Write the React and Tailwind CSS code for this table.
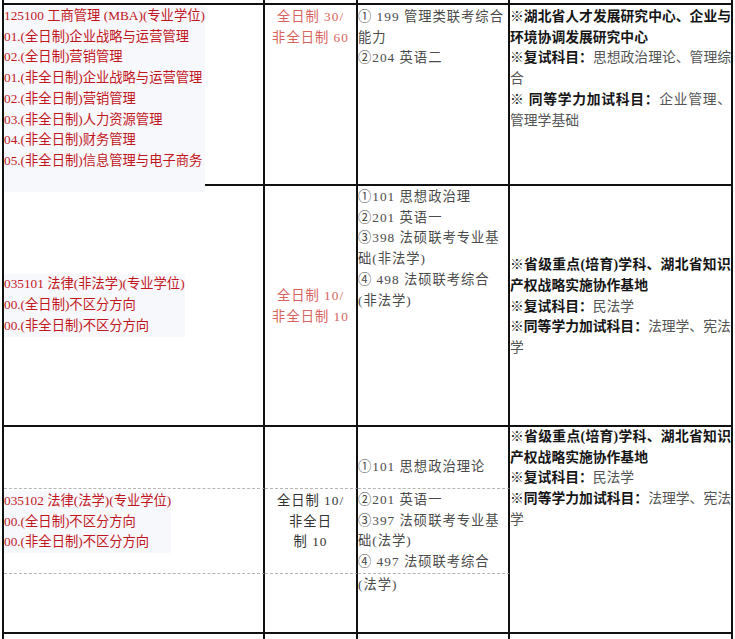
import React from 'react'

const cell = 'border-r-2 border-b-2 border-[#111]'
const dash = 'border-r-2 border-b border-r-[#111] border-b-[#b5b5b5] [border-bottom-style:dashed]'
const full = 'text-justify [text-align-last:justify]'

const Red = ({ lines }) => (
  <div className="w-fit bg-[#f7f8fb] text-[#c2161e]">
    {lines.map((l, i) => (
      <div key={i} className="whitespace-nowrap">{l}</div>
    ))}
  </div>
)

const Quota = ({ lines, color }) => (
  <div className={`text-center tracking-[1px] ${color}`}>
    {lines.map((l, i) => (
      <div key={i} className="whitespace-nowrap">{l}</div>
    ))}
  </div>
)

const Lines = ({ lines }) => (
  <div className="tracking-[1px] text-[#4a4a4a]">
    {lines.map((l, i) => (
      <div key={i} className="whitespace-nowrap">{l}</div>
    ))}
  </div>
)

const LawNotes = () => (
  <div className="text-[13.8px] text-[#555]">
    <div className={`font-bold text-[#151515] ${full}`}>※省级重点(培育)学科、湖北省知识</div>
    <div className="font-bold text-[#151515]">产权战略实施协作基地</div>
    <div><b className="text-[#151515]">※复试科目：</b>民法学</div>
    <div className={full}><b className="text-[#151515]">※同等学力加试科目：</b>法理学、宪法</div>
    <div>学</div>
  </div>
)

export default function App() {
  return (
    <div className="h-[639px] overflow-hidden bg-white font-['Liberation_Serif','Noto_Sans_CJK_SC',serif] text-[13.3px] leading-[20.7px]">
      <div className="ml-[2px] grid w-fit grid-cols-[261px_93px_152px_223px] grid-rows-[5px_181px_241px_62px_85px_60px_5px] border-l-2 border-[#111]">
        {/* tail of the row above */}
        <div className={cell} />
        <div className={cell} />
        <div className={cell} />
        <div className={cell} />

        {/* MBA */}
        <div className={`${cell} pt-[1px]`}>
          <Red
            lines={[
              '125100 工商管理 (MBA)(专业学位)',
              '01.(全日制)企业战略与运营管理',
              '02.(全日制)营销管理',
              '01.(非全日制)企业战略与运营管理',
              '02.(非全日制)营销管理',
              '03.(非全日制)人力资源管理',
              '04.(非全日制)财务管理',
              '05.(非全日制)信息管理与电子商务',
              '\u00a0',
            ]}
          />
        </div>
        <div className={`${cell} pt-[2px]`}>
          <Quota lines={['全日制 30/', '非全日制 60']} color="text-[#d8625e]" />
        </div>
        <div className={`${cell} pt-[2px]`}>
          <Lines lines={['① 199 管理类联考综合', '能力', '②204 英语二']} />
        </div>
        <div className={`${cell} pt-[2px] text-[13.8px] text-[#555]`}>
          <div className={`font-bold text-[#151515] ${full}`}>※湖北省人才发展研究中心、企业与</div>
          <div className="font-bold text-[#151515]">环境协调发展研究中心</div>
          <div className={full}><b className="text-[#151515]">※复试科目：</b>思想政治理论、管理综</div>
          <div>合</div>
          <div className={full}><b className="text-[#151515]">※ 同等学力加试科目：</b>企业管理、</div>
          <div>管理学基础</div>
        </div>

        {/* 法律(非法学) */}
        <div className={`${cell} flex items-center`}>
          <Red lines={['035101 法律(非法学)(专业学位)', '00.(全日制)不区分方向', '00.(非全日制)不区分方向']} />
        </div>
        <div className={`${cell} flex items-center justify-center pt-[2px]`}>
          <Quota lines={['全日制 10/', '非全日制 10']} color="text-[#d8625e]" />
        </div>
        <div className={`${cell} pt-[1px]`}>
          <Lines
            lines={['①101 思想政治理', '②201 英语一', '③398 法硕联考专业基', '础(非法学)', '④ 498 法硕联考综合', '(非法学)']}
          />
        </div>
        <div className={`${cell} flex items-center pt-[3px]`}>
          <LawNotes />
        </div>

        {/* 法律(法学) */}
        <div className={`${dash} col-start-1 row-start-4`} />
        <div className={`${dash} col-start-2 row-start-4`} />
        <div className={`${dash} col-start-3 row-start-4 pt-[30px]`}>
          <Lines lines={['①101 思想政治理论']} />
        </div>
        <div className={`${cell} col-start-4 row-start-4 row-span-3`}>
          <LawNotes />
        </div>

        <div className={`${dash} col-start-1 row-start-5 pt-[2px]`}>
          <Red lines={['035102 法律(法学)(专业学位)', '00.(全日制)不区分方向', '00.(非全日制)不区分方向']} />
        </div>
        <div className={`${dash} col-start-2 row-start-5 pt-[2px]`}>
          <Quota lines={['全日制 10/', '非全日', '制 10']} color="text-[#333]" />
        </div>
        <div className={`${dash} col-start-3 row-start-5 pt-[1px]`}>
          <Lines lines={['②201 英语一', '③397 法硕联考专业基', '础(法学)', '④ 497 法硕联考综合']} />
        </div>

        <div className={`${cell} col-start-1 row-start-6`} />
        <div className={`${cell} col-start-2 row-start-6`} />
        <div className={`${cell} col-start-3 row-start-6 pt-[1px]`}>
          <Lines lines={['(法学)']} />
        </div>

        {/* start of the next row */}
        <div className="border-r-2 border-[#111]" />
        <div className="border-r-2 border-[#111]" />
        <div className="border-r-2 border-[#111]" />
        <div className="border-r-2 border-[#111]" />
      </div>
    </div>
  )
}
